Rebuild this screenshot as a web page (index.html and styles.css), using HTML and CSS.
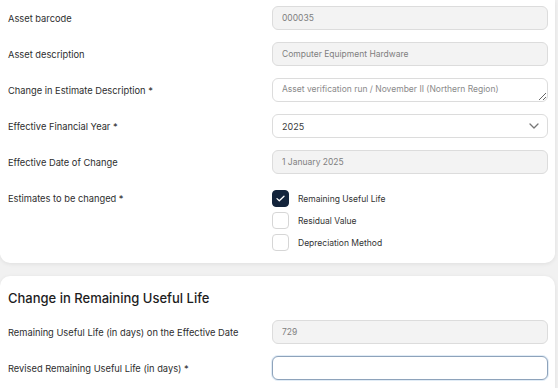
FILE: index.html
```html
<!DOCTYPE html>
<html lang="en">
<head>
  <meta charset="UTF-8">
  <meta name="viewport" content="width=device-width, initial-scale=1.0">
  <title>Change in Estimate</title>
  <link rel="stylesheet" href="styles.css">
</head>
<body>

  <div class="card card-top">
    <div class="form-row">
      <label for="barcode">Asset barcode</label>
      <input type="text" id="barcode" class="field field-readonly" value="000035" readonly />
    </div>
    <div class="form-row">
      <label for="description">Asset description</label>
      <input type="text" id="description" class="field field-readonly" value="Computer Equipment Hardware" readonly />
    </div>
    <div class="form-row">
      <label for="changeDesc">Change in Estimate Description *</label>
      <textarea id="changeDesc" class="field field-area" placeholder="Asset verification run / November II (Northern Region)"></textarea>
    </div>
    <div class="form-row">
      <label for="year">Effective Financial Year *</label>
      <div class="select-wrap">
        <select id="year" class="field field-select">
          <option>2025</option>
        </select>
        <svg class="chevron" width="10" height="6" viewBox="0 0 10 6"><path d="M1 1l4 4 4-4" fill="none" stroke="#777" stroke-width="1.3" stroke-linecap="round" stroke-linejoin="round"/></svg>
      </div>
    </div>
    <div class="form-row">
      <label for="effDate">Effective Date of Change</label>
      <input type="text" id="effDate" class="field field-readonly" value="1 January 2025" readonly />
    </div>
    <div class="form-row form-row-top">
      <label>Estimates to be changed *</label>
      <div class="checks">
        <div class="check-item">
          <span class="box box-checked">
            <svg width="9" height="7" viewBox="0 0 9 7"><path d="M1 3.6l2.3 2.2L8 1.2" fill="none" stroke="#fff" stroke-width="1.3" stroke-linecap="round" stroke-linejoin="round"/></svg>
          </span>
          <span>Remaining Useful Life</span>
        </div>
        <div class="check-item">
          <span class="box"></span>
          <span>Residual Value</span>
        </div>
        <div class="check-item">
          <span class="box"></span>
          <span>Depreciation Method</span>
        </div>
      </div>
    </div>
  </div>

  <div class="card card-bottom">
    <h3>Change in Remaining Useful Life</h3>
    <div class="form-row">
      <label for="rulDays">Remaining Useful Life (in days) on the Effective Date</label>
      <input type="text" id="rulDays" class="field field-readonly" value="729" readonly />
    </div>
    <div class="form-row">
      <label for="revised">Revised Remaining Useful Life (in days) *</label>
      <input type="text" id="revised" class="field field-focus" />
    </div>
  </div>

</body>
</html>
```

FILE: styles.css
```css
body {
  margin: 0;
  background: #f1f1f1;
  font-family: Inter, 'Noto Sans', Arial, sans-serif;
  color: #2b2b2b;
}
.card {
  background: #fff;
  width: 539px;
  padding: 0 8px;
  border-radius: 10px;
  box-shadow: 0 1px 4px rgba(0, 0, 0, 0.08);
}
.card-top {
  border-top-left-radius: 0;
  border-top-right-radius: 0;
  padding-top: 6px;
  padding-bottom: 12px;
}
.card-bottom {
  margin-top: 13px;
  padding-top: 12px;
  padding-bottom: 12px;
}
h3 {
  margin: 0 0 12px;
  font-size: 13px;
  font-weight: 500;
  line-height: 20px;
  color: #1d1d1d;
}
.form-row {
  display: grid;
  grid-template-columns: 264px 276px;
  align-items: center;
  margin-bottom: 12px;
}
.form-row-top {
  align-items: start;
  margin-top: 16px;
  margin-bottom: 0;
}
.form-row label {
  font-size: 9.3px;
  color: #2e2e2e;
}
.form-row-top label {
  line-height: 17px;
}
.field {
  box-sizing: border-box;
  width: 276px;
  height: 24px;
  margin: 0;
  padding: 0 9px;
  border: 1px solid #dcdcdc;
  border-radius: 6px;
  background: #fff;
  font-family: inherit;
  font-size: 8.5px;
  font-weight: 400;
  color: #808080;
  outline: none;
}
.field-readonly {
  background: #f3f3f3;
}
.field-area {
  display: block;
  padding: 5px 9px;
  resize: vertical;
  line-height: 11px;
}
.field-area::placeholder {
  color: #8a8a8a;
}
.select-wrap {
  position: relative;
}
.field-select {
  appearance: none;
  -webkit-appearance: none;
  display: block;
  font-size: 9px;
  color: #3a3a3a;
}
.chevron {
  position: absolute;
  right: 9px;
  top: 9px;
}
.field-focus {
  border-color: #8ea3bb;
  box-shadow: 0 0 0 1px rgba(170, 200, 230, 0.35);
}
.checks {
  display: flex;
  flex-direction: column;
  gap: 5px;
}
.check-item {
  display: flex;
  align-items: center;
  gap: 9px;
  font-size: 8.5px;
  color: #333;
}
.box {
  box-sizing: border-box;
  width: 17px;
  height: 17px;
  border: 1px solid #d6d6d6;
  border-radius: 4px;
  display: flex;
  align-items: center;
  justify-content: center;
}
.box-checked {
  background: #13243b;
  border-color: #13243b;
}
```
